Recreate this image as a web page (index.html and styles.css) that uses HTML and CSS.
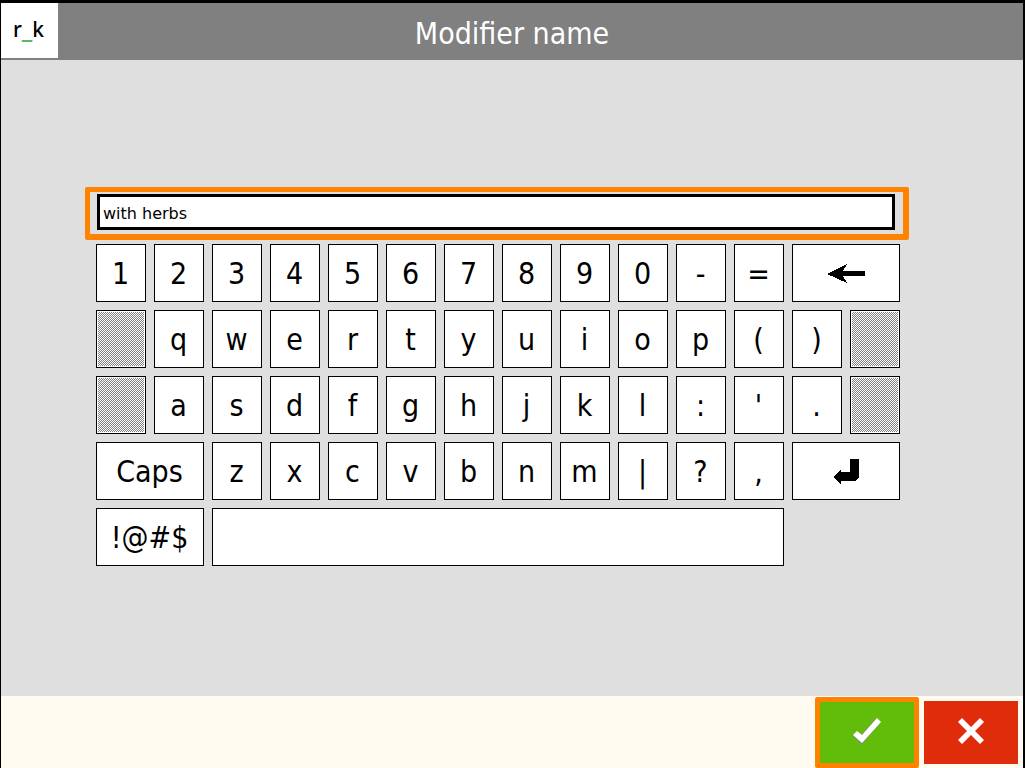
FILE: index.html
```html
<!DOCTYPE html>
<html lang="en">
  <head>
    <meta charset="UTF-8" />
    <meta name="viewport" content="width=device-width, initial-scale=1.0" />
    <title>Modifier name</title>
    <link rel="stylesheet" href="styles.css">
  </head>
  <body>
    <header class="header">
      <a href="#" class="logo">r<span class="logo-line">_</span>k</a>
      <h1 class="title" id="title">Modifier name</h1>
    </header>

    <main class="main">
      <div class="field">
        <input class="field-input" type="text" value="with herbs" aria-labelledby="title" />
      </div>

      <div class="keyboard">
        <!-- row 1 -->
        <button class="key" type="button">1</button>
        <button class="key" type="button">2</button>
        <button class="key" type="button">3</button>
        <button class="key" type="button">4</button>
        <button class="key" type="button">5</button>
        <button class="key" type="button">6</button>
        <button class="key" type="button">7</button>
        <button class="key" type="button">8</button>
        <button class="key" type="button">9</button>
        <button class="key" type="button">0</button>
        <button class="key" type="button">-</button>
        <button class="key" type="button">=</button>
        <button class="key key__wide" type="button" aria-label="Backspace">
          <svg width="38" height="20" viewBox="0 0 38 20" shape-rendering="crispEdges">
            <path d="M0 10 20 0 16 7H37L38 8V11L37 12H16L20 19Z" />
          </svg>
        </button>
        <!-- row 2 -->
        <button class="key key__blank" type="button" aria-label="Blank" disabled></button>
        <button class="key" type="button">q</button>
        <button class="key" type="button">w</button>
        <button class="key" type="button">e</button>
        <button class="key" type="button">r</button>
        <button class="key" type="button">t</button>
        <button class="key" type="button">y</button>
        <button class="key" type="button">u</button>
        <button class="key" type="button">i</button>
        <button class="key" type="button">o</button>
        <button class="key" type="button">p</button>
        <button class="key" type="button">(</button>
        <button class="key" type="button">)</button>
        <button class="key key__blank" type="button" aria-label="Blank" disabled></button>
        <!-- row 3 -->
        <button class="key key__blank" type="button" aria-label="Blank" disabled></button>
        <button class="key" type="button">a</button>
        <button class="key" type="button">s</button>
        <button class="key" type="button">d</button>
        <button class="key" type="button">f</button>
        <button class="key" type="button">g</button>
        <button class="key" type="button">h</button>
        <button class="key" type="button">j</button>
        <button class="key" type="button">k</button>
        <button class="key" type="button">l</button>
        <button class="key" type="button">:</button>
        <button class="key" type="button">'</button>
        <button class="key" type="button">.</button>
        <button class="key key__blank" type="button" aria-label="Blank" disabled></button>
        <!-- row 4 -->
        <button class="key key__wide" type="button">Caps</button>
        <button class="key" type="button">z</button>
        <button class="key" type="button">x</button>
        <button class="key" type="button">c</button>
        <button class="key" type="button">v</button>
        <button class="key" type="button">b</button>
        <button class="key" type="button">n</button>
        <button class="key" type="button">m</button>
        <button class="key" type="button">|</button>
        <button class="key" type="button">?</button>
        <button class="key" type="button">,</button>
        <button class="key key__wide" type="button" aria-label="Enter">
          <svg width="26" height="26" viewBox="0 0 26 26" shape-rendering="crispEdges">
            <path d="M17 0H26V18L22 22H8V25L0 18 8 10V13H17Z" />
          </svg>
        </button>
        <!-- row 5 -->
        <button class="key key__wide" type="button">!@#$</button>
        <button class="key key__space" type="button" aria-label="Space"></button>
      </div>
    </main>

    <footer class="footer">
      <button class="action action__ok" type="button" aria-label="OK">
        <svg width="28" height="26" viewBox="0 0 28 26">
          <path d="M0 18 4 13 8 17 23 0 28 4 9 26 8 26Z" fill="#888" />
          <path d="M0 17 4 13 9 17 24 0 28 4 9 25Z" fill="#fff" />
        </svg>
      </button>
      <button class="action action__cancel" type="button" aria-label="Cancel">
        <svg width="26" height="26" viewBox="0 0 26 26">
          <path d="M4 0 13 9 22 0 26 4 17 13 26 22 22 26 13 17 4 26 0 22 9 13 0 4Z" fill="#fff" />
        </svg>
      </button>
    </footer>
  </body>
</html>
```

FILE: styles.css
```css
* {
  box-sizing: border-box;
  padding: 0;
  margin: 0;
}

body {
  display: flex;
  flex-direction: column;
  min-height: 100vh;
  font-family: "DejaVu Sans Condensed", "Noto Sans", sans-serif;
  color: #000;
  background-color: #dfdfdf;
  border: solid #000;
  border-width: 3px 2px 0 1px;
}

button,
input {
  font-family: inherit;
  color: inherit;
}

.header {
  display: grid;
  grid-template-columns: 57px 1fr 57px;
  height: 57px;
  background-color: #808080;
}

.logo {
  height: 55px;
  padding-right: 2px;
  font-family: "Noto Sans", sans-serif;
  font-size: 21px;
  font-weight: 500;
  line-height: 53px;
  color: #000;
  text-align: center;
  text-decoration: none;
  background-color: #fff;
}

.logo-line {
  font-family: "DejaVu Sans", sans-serif;
  font-weight: 700;
  color: #5cb85c;
}

.title {
  font-size: 30px;
  font-weight: 400;
  line-height: 61px;
  color: #fff;
  text-align: center;
}

.main {
  flex: 1;
  padding: 127px 114px 40px 84px;
}

.field {
  padding: 2px 8px 4px 7px;
  border: solid #ff8200;
  border-width: 5px 6px 6px 5px;
  border-radius: 2px;
}

.field-input {
  display: block;
  width: 100%;
  height: 36px;
  padding: 2px 3px 0;
  font-family: "DejaVu Sans", sans-serif;
  font-size: 16px;
  background-color: #fff;
  border: 3px solid #000;
  border-radius: 0;
  outline: none;
}

.keyboard {
  display: grid;
  grid-template-columns: repeat(14, 1fr);
  grid-auto-rows: 58px;
  gap: 8px;
  margin: 4px 9px 0 11px;
}

.key {
  display: flex;
  align-items: center;
  justify-content: center;
  min-width: 0;
  padding: 1px 1px 0 0;
  font-size: 30px;
  background-color: #fff;
  border: 1px solid #000;
  cursor: pointer;
}

.key__wide {
  grid-column: span 2;
}

.key__space {
  grid-column: span 10;
}

/* 1px checkerboard */
.key__blank {
  padding: 1px;
  background-image: repeating-conic-gradient(#808080 0 25%, #fff 0 50%);
  background-origin: content-box;
  background-clip: content-box;
  background-size: 2px 2px;
  box-shadow: inset 0 0 0 1px #fff;
  cursor: default;
}

.footer {
  display: flex;
  gap: 5px;
  align-items: center;
  justify-content: flex-end;
  height: 72px;
  padding: 1px 5px 0;
  background-color: #fffbf0;
}

.action {
  display: flex;
  align-items: center;
  justify-content: center;
  padding-bottom: 3px;
  border: none;
  cursor: pointer;
}

.action__ok {
  width: 104px;
  height: 71px;
  background-color: #62bd0a;
  border: 5px solid #ff8200;
  border-radius: 2px;
}

.action__cancel {
  width: 94px;
  height: 63px;
  background-color: #df2c0b;
}
```
